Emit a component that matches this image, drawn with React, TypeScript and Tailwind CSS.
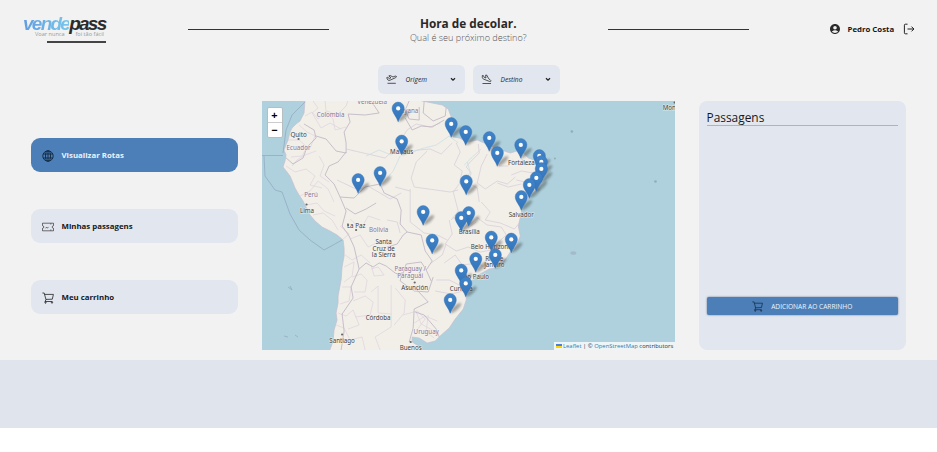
import React from "react";
import { MdAccountCircle } from "react-icons/md";

const pins: [number, number][] = [
  [398, 108.5], [451, 124], [465.5, 132], [489, 138], [401.5, 141.5], [520.5, 145], [497, 153],
  [539, 156], [541, 162], [541, 169], [380, 173], [536, 178], [358, 180], [466, 181.5], [529, 185],
  [521, 197], [423, 212], [468.5, 213], [461, 218], [491, 237.5], [511, 239.5], [432, 240.5],
  [495, 255], [475.5, 259], [461, 270.5], [465.5, 283.5], [450, 300],
];

const labels: [string, number, number, boolean][] = [
  ["Venezuela", 372, 103, true], ["Guyana", 407, 112.5, true], ["Colombia", 330.5, 116, true],
  ["Quito", 298.5, 136, false], ["Ecuador", 298.5, 149.5, true], ["Manaus", 401.5, 153, false],
  ["Fortaleza", 521, 164, false], ["Perú", 311, 196.5, true], ["Lima", 307, 212, false],
  ["La Paz", 356, 227.5, false], ["Bolivia", 378.5, 231, true], ["Santa", 383.5, 243.5, false],
  ["Cruz de", 383.5, 250, false], ["la Sierra", 383.5, 256.5, false], ["Salvador", 521, 216, false],
  ["Brasília", 469, 233, false], ["Belo Horizonte", 492, 248, false], ["Rio de", 494, 260, false],
  ["Janeiro", 494, 266.5, false], ["São Paulo", 474.5, 278, false], ["Curitiba", 461, 290, false],
  ["Paraguay /", 410, 270, true], ["Paraguái", 410, 277, true], ["Asunción", 414.5, 289.5, false],
  ["Córdoba", 378, 319.5, false], ["Santiago", 342, 342, false], ["Uruguay", 426, 333.5, true],
  ["Buenos", 410.5, 349, false], ["Monrovia", 676, 109, false],
];

function SouthAmericaMap() {
  return (
    <svg className="block h-full w-full" viewBox="262 101 413 249" preserveAspectRatio="none" fontFamily="'Noto Sans', sans-serif">
      <defs>
        <linearGradient id="pin" x1="0" y1="0" x2="0" y2="1">
          <stop offset="0" stopColor="#4284c8" />
          <stop offset="1" stopColor="#3274bb" />
        </linearGradient>
        <filter id="soft" x="-50%" y="-50%" width="200%" height="200%"><feGaussianBlur stdDeviation="1.1" /></filter>
        <clipPath id="land"><use href="#coast" /></clipPath>
      </defs>
      <rect x="262" y="101" width="413" height="249" fill="#aed1dd" />
      <path id="coast" fill="#f2efe9" stroke="#c5bed0" strokeWidth=".7" d="M305 99 304 113 300 121 296 124 292 128 290 132 288 140 284 150 286 155 285 161 283 167 287 172 290 176 293 183 295 188 299 195 303 201 307 209 310 215 315 221 322 227 330 231 337 235 343 240 344 248 344 256 342 267 341 280 338 296 338 303 336 313 337 320 334 330 333 341 329 352 424 352 420 347 412 342 412 337 419 338 427 343 435 341 441 335 449 328 455 319 463 309 466 300 466 288 470 282 478 275 489 269 499 267 506 258 510 252 516 246 520 236 518 226 521 213 522 205 530 196 538 188 543 178 543 169 539 162 528 158 520 150 510 153 504 151 497 153 492 146 484 143 477 140 467 142 459 138 453 137 447 128 451 117 448 109 442 105 432 103 422 101 417 99Z" />
      <g clipPath="url(#land)" fill="none">
        <g stroke="#ded3de" strokeWidth=".7">
          <path d="M305 116 312 112 318 119 327 111 337 115 346 106 348 100M313 101 318 108 312 113 321 128 330 123 341 129M325 101 326 112 333 119 335 130 346 127M288 140 299 140 307 147 302 156 291 157M299 125 307 132 315 136 310 148M292 166 297 160 305 155 316 151M286 166 295 172 306 169 315 176 310 185 322 188M300 196 310 191 318 181 328 189 334 202M306 205 317 203 324 211 335 216M313 215 323 213 332 220 338 230M319 156 324 165 320 176 329 182M340 226 349 234 343 239M350 219 361 229 368 216 380 220M350 239 360 235 368 247 378 242 391 245M345 255 352 260 361 255 370 263M344 267 354 262 352 276 344 282M352 277 361 274 367 280 365 292 354 292M342 287 351 287 349 301 340 304M353 301 365 296 373 302 370 315 355 317M338 313 346 316 353 310 359 325 348 329M336 325 344 328 350 340 362 337 365 350M371 292 378 286 378 313 391 314M391 285 391 327 375 337 380 350M371 265 374 276 384 275 378 267 371 269M395 288 405 300 404 313 394 325M403 315 417 311 425 319 416 331M416 312 421 324 434 331M428 315 426 332 434 338M414 323 425 316 437 321" />
        </g>
        <g stroke="#d8cfd9" strokeWidth=".8">
          <path d="M346 149 385 158 395 148 405 154 418 150 430 149M407 130 416 124 430 127 440 123M407 130 401 139 409 148M427 151 416 162 411 178 414 187 450 192 458 190M430 149 441 154 452 143M456 143 460 152 454 165 462 171 459 184 453 192 458 211 451 220M478 144 479 153 469 163 466 167 471 173 467 182 477 188 479 202M487 154 481 166 477 183 485 189 497 181 507 184 515 177M496 154 499 166 508 166 512 160 519 165M518 153 524 163 533 162M511 175 521 171 533 173 543 171M516 180 525 182 538 180M497 183 508 187 521 184M481 202 490 212 485 220 500 223 514 229 520 222M476 217 487 225 501 227 506 235 496 244 491 253M453 218 463 220 468 228 476 222M449 220 452 234 445 244 456 251 468 247 480 252 491 250M446 244 442 255 431 263M444 263 455 255 462 265 478 263 486 269M436 280 449 280 461 286M435 291 451 294 463 291M410 189 410 222 424 233 437 235 447 240M387 220 397 222 400 233M395 187 410 191M337 180 358 190 368 186 390 199 401 193" />
        </g>
        <g stroke="#c3b9c6" strokeWidth=".9">
          <path d="M304 124 314 130 316 138 307 147 303 158 293 164 285 157M316 136 326 139 336 151 346 153 346 143 344 132 350 122 348 114 365 115 379 113 373 104 365 101M346 152 338 162 329 166 325 175 334 184 340 197 354 198 365 187 380 184 384 193 397 199 401 210 400 224 407 232M340 197 346 211 342 226 349 236 354 247 359 269M346 208 355 214 366 209 376 203M359 269 366 263 373 267 379 263 386 266 395 273 402 276M387 247 397 244 403 235 407 232 421 235 425 251 432 261 426 270 431 281M402 276 406 264 421 262 426 270M359 269 351 287 353 298 342 314 344 331 341 350M400 281 414 291 428 292 433 277M400 281 402 272M415 288 428 302 414 309 413 328 409 342M415 312 424 315 436 329 439 337M409 101 405 110 409 119 419 120 419 107M405 118 412 130 421 126 432 127 444 120M424 101 423 113 433 121 445 116 446 107" />
        </g>
        <path stroke="#cadfe2" strokeWidth=".8" d="M366 156 379 150 391 155 402 147 414 151 424 148 436 145 449 136 458 143M464 165 471 158 481 149M381 185 393 171 400 156M463 183 470 172 467 162" />
      </g>
      <g fill="none" stroke="#94a9c2" strokeWidth=".8">
        <path d="M305 102 292 115 286 130 283 153M262 155.500H283M264 156 265 176 275 190 282 192 290 214 299 230 310 240 324 250 342 240" />
        <path d="M288 287 292 290 290 286M284 336 288 337M295 335 298 337" />
      </g>
      <g fill="#90aeb9"><circle cx="571.500" cy="131.500" r="1.300" /><circle cx="554.500" cy="158.500" r="1" /><circle cx="655" cy="181.500" r="1.300" /><ellipse cx="573" cy="253" rx="3" ry="1.800" fill="#a4b9cc" /></g>
      <g fontSize="6.200" textAnchor="middle" stroke="#f7f4ef" strokeOpacity=".75" strokeWidth="1" paintOrder="stroke">
        {labels.map(([name, x, y, country]) => <text key={name} x={x} y={y + 0.6} fill={country ? "#85779a" : "#404040"}>{name}</text>)}
      </g>
      <g fill="#666"><circle cx="298.500" cy="139" r="1.100" /><circle cx="306.500" cy="204.500" r="1.100" /><circle cx="348" cy="225" r="1.100" /><circle cx="356" cy="230" r="1.100" /><circle cx="414.500" cy="282.500" r="1.100" /><circle cx="342" cy="334.500" r="1.100" /><circle cx="410.500" cy="342" r="1.100" /><circle cx="674" cy="102.500" r="1" /></g>
      <g>
        {pins.map(([x, y]) => <ellipse key={`${x}-${y}`} cx={x + 5.5} cy={y + 8} rx="7" ry="2.300" transform={`rotate(-42 ${x + 5.5} ${y + 8})`} fill="#333" opacity=".4" filter="url(#soft)" />)}
        {pins.map(([x, y]) => (
          <g key={`${x}-${y}`} transform={`translate(${x} ${y})`}>
            <path d="M0 13.300C-1.700 8-6.100 4.200-6.100-.3A6.100 6.100 0 0 1 6.100-.3C6.100 4.200 1.700 8 0 13.300Z" fill="url(#pin)" stroke="#2f70b0" strokeWidth=".4" />
            <circle r="2.100" cy="-.1" fill="white" />
          </g>
        ))}
      </g>
    </svg>
  );
}

function TakeoffIcon() {
  return (
    <svg className="h-[11px] w-[11px]" viewBox="0 0 11 11" fill="none" stroke="currentColor" strokeWidth=".75" strokeLinejoin="round">
      <path d="M.7 3.700 1.800 3.300 3.200 4.500 5 3.800 2.800 1.900 4.200 1.500 7 3 8.900 2.200Q10.400 1.700 10.500 2.600 10.500 3.200 9.500 3.700L4.100 6.200Q2.600 6.800 1.900 6ZM1.500 9.300H9.800" />
    </svg>
  );
}

function LandingIcon() {
  return (
    <svg className="h-[11px] w-[11px]" viewBox="0 0 11 11" fill="none" stroke="currentColor" strokeWidth=".75" strokeLinejoin="round">
      <path d="M1.300 1.500 2.500 1.700 3.200 3.400 4.900 4 4.700 1 6 1.300 7.500 4.600 9 5.600Q10.300 6.700 9.800 7.300 9.400 7.800 8.200 7.300L2.800 5.200Q1.400 4.600 1.300 3.500ZM1.500 9.500H10" />
    </svg>
  );
}

function GlobeIcon() {
  return (
    <svg className="h-3 w-3 text-[#10263e]" viewBox="0 0 12 12" fill="none" stroke="currentColor" strokeWidth=".9">
      <circle cx="6" cy="6" r="5.200" /><ellipse cx="6" cy="6" rx="2.500" ry="5.200" /><path d="M1.300 4H10.700M1.300 8H10.700M6 .8V11.200" />
    </svg>
  );
}

function ExitIcon() {
  return (
    <svg className="ml-[8px] h-3 w-3" viewBox="0 0 12 12" fill="none" stroke="currentColor" strokeWidth=".95">
      <path d="M4.500 1.200H2.400Q1.400 1.200 1.400 2.200V9.800Q1.400 10.800 2.400 10.800H4.500M4.500 6H10.800M8.500 3.600 10.900 6 8.500 8.400" />
    </svg>
  );
}

function CartIcon({ className }: { className: string }) {
  return (
    <svg className={className} viewBox="0 0 12 12" fill="none" stroke="currentColor" strokeWidth=".75">
      <path d="M.4 1H2.200L4 7.800 2.900 9.500H10.500M2.600 2.400H11.400L10.300 7.200 3.900 7.400" />
      <circle cx="3.500" cy="10.600" r=".65" /><circle cx="10" cy="10.600" r=".65" />
    </svg>
  );
}

function TicketIcon() {
  return (
    <svg className="h-3 w-3" viewBox="0 0 12 12" fill="none" stroke="currentColor" strokeWidth=".6">
      <path d="M.5 2.200H11.500V4.700A1.300 1.300 0 0 0 11.500 7.300V9.800H.5V7.300A1.300 1.300 0 0 0 .5 4.700ZM8.800 2.400V3.500M8.800 8.500V9.600M3.600 7.300 4.300 6.300 5.400 7.100 6.500 5.900" />
    </svg>
  );
}

function Select({ icon, label }: { icon: React.ReactNode; label: string }) {
  return (
    <button className="flex h-[29px] w-[87px] items-center rounded-[6px] bg-[#e2e6ef] pl-2 pr-[9px] text-[#222]">
      {icon}
      <span className="ml-[9px] flex-1 text-left text-[6.600px] italic">{label}</span>
      <svg className="h-[5px] w-[6px]" viewBox="0 0 6 5" fill="none" stroke="currentColor" strokeWidth="1.300"><path d="m1 1.200 2 2 2-2" /></svg>
    </button>
  );
}

export default function App() {
  const item = "flex h-[34px] w-[207px] items-center gap-[7.500px] rounded-[9px] pl-[11px] pt-px text-[7.850px] font-bold";
  return (
    <div className="h-[452px] w-[937px] overflow-hidden bg-white font-['Open_Sans',sans-serif] text-[#171717]">
      <div className="h-[360px] bg-[#f2f2f2]">
        <header className="flex h-[65px] items-start">
          <div className="w-[188px] pl-[23px] pt-[13.500px]">
            <div className="h-[17px] font-['Liberation_Sans',sans-serif] text-[19px] leading-[20px] font-bold italic tracking-[-1.750px] text-[#2b2b2b]">
              <span className="bg-linear-to-r from-[#629de0] to-[#78c7ec] bg-clip-text text-transparent">vende</span><span>pass</span>
            </div>
            <div className="flex w-[81px] justify-between pl-[12px] text-[5.600px] leading-[6px] text-[#999]"><span>Voar nunca</span><span>foi tão fácil</span></div>
            <div className="mt-[4.500px] ml-[23.500px] h-[1.500px] w-[59px] bg-[#444]" />
          </div>
          <div className="mt-[28.500px] h-[1.500px] w-[140.500px] bg-[#333]" />
          <div className="w-[279.500px] pt-[15px] text-center">
            <h1 className="text-[11.800px] leading-[17px] font-bold text-[#292929]">Hora de decolar.</h1>
            <p className="text-[9.100px] leading-[12px] font-light text-[#555]">Qual é seu próximo destino?</p>
          </div>
          <div className="mt-[28.500px] h-[1.500px] w-[140.500px] bg-[#333]" />
          <div className="flex flex-1 items-center pt-[22.500px] pl-[80px]">
            <MdAccountCircle className="h-3 w-3 text-[#2b2b2b]" />
            <span className="ml-[7px] w-[47px] text-[7.800px] leading-[13px] font-bold whitespace-nowrap">Pedro Costa</span>
            <ExitIcon />
          </div>
        </header>
        <div className="flex h-[36px] justify-center gap-2">
          <Select icon={<TakeoffIcon />} label="Origem" />
          <Select icon={<LandingIcon />} label="Destino" />
        </div>
        <main className="flex h-[249px]">
          <nav className="flex w-[261.500px] flex-col gap-[37px] pt-[37px] pl-[31px]">
            <button className={`${item} bg-[#4c7eb7] text-[#e9f3ff]`}><GlobeIcon />Visualizar Rotas</button>
            <button className={`${item} bg-[#e2e6ef]`}><TicketIcon />Minhas passagens</button>
            <button className={`${item} bg-[#e2e6ef]`}><CartIcon className="h-3 w-3" />Meu carrinho</button>
          </nav>
          <section className="relative w-[413.500px]">
            <SouthAmericaMap />
            <div className="absolute top-[5.500px] left-[5px] flex h-[31px] w-[16px] flex-col rounded-[2px] border border-[#b5bec1] bg-white">
              <button className="flex flex-1 items-center justify-center border-b border-[#ccc] text-[11px] leading-none font-bold text-black">+</button>
              <button className="flex flex-1 items-center justify-center text-[11px] leading-none font-bold text-black">−</button>
            </div>
            <div className="absolute right-0 bottom-0 flex h-[8.500px] w-[121px] items-center bg-[#edf5f7] pl-[2px] text-[5.880px] leading-[8px] whitespace-pre text-[#333]">
              <svg className="mr-[1px] h-1 w-1.5 shrink-0" viewBox="0 0 6 4"><path fill="#4C7BE1" d="M0 0h6v2H0z" /><path fill="#FFD500" d="M0 2h6v2H0z" /></svg>
              <span className="text-[#2b7db3]">Leaflet</span> | © <span className="text-[#2b7db3]">OpenStreetMap</span> contributors
            </div>
          </section>
          <aside className="ml-[24px] flex w-[206.500px] flex-col rounded-[8px] bg-[#e2e6ef] px-[7.500px] pt-[8px]">
            <h2 className="h-[17px] border-b border-[#b0b3ba] text-[11.900px] leading-[17.500px]">Passagens</h2>
            <button className="mt-[171px] flex h-[18px] items-center justify-center gap-2 rounded-[2px] bg-[#4c7eb7] pt-px text-[6.600px] text-[#eff6ff] shadow-[0_0_2px_#53708c]">
              <CartIcon className="h-[11px] w-[11px] text-[#0e263e]" />ADICIONAR AO CARRINHO
            </button>
          </aside>
        </main>
      </div>
      <footer className="h-[68px] bg-[#e0e4ec]" />
    </div>
  );
}
